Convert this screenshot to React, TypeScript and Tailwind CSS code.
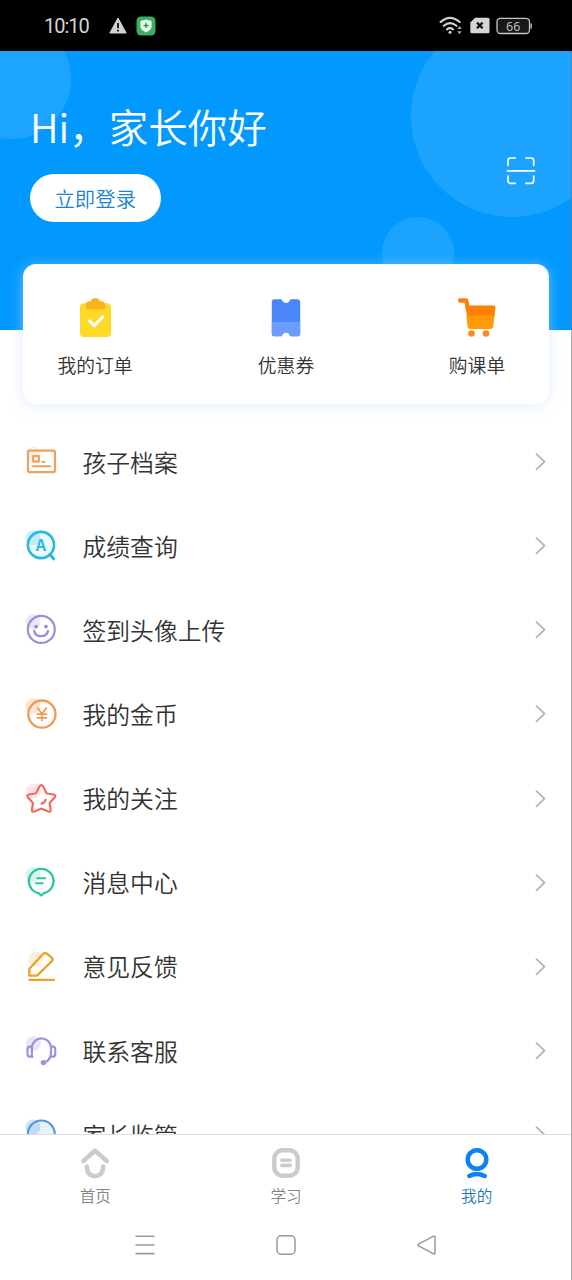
import type { ReactNode } from "react";

function Glyph({ children, tint, cx = 10, cy = 8 }: { children: ReactNode; tint: string; cx?: number; cy?: number }) {
  return (
    <svg width="36" height="36" viewBox="0 0 36 36" fill="none" strokeLinecap="round" strokeLinejoin="round" className="shrink-0">
      <circle cx={cx} cy={cy} r="7.5" fill={tint} />
      {children}
    </svg>
  );
}

const rows: { label: string; icon: ReactNode }[] = [
  {
    label: "孩子档案",
    icon: (
      <Glyph tint="#fdf0e4" cx={10.3} cy={10}>
        <g stroke="#f0a05a" strokeWidth="2.2">
          <rect x="5" y="6.600" width="27" height="21.600" rx="2" />
          <rect x="10.200" y="12" width="5.600" height="5.600" />
          <path d="M19.500 18h2M10 22.300h17.400" strokeWidth="1.900" />
        </g>
      </Glyph>
    ),
  },
  {
    label: "成绩查询",
    icon: (
      <Glyph tint="#cdeefa" cy={10}>
        <circle cx="18" cy="17" r="13.100" fill="#7fd6f0" fillOpacity="0.12" stroke="#27bbdd" strokeWidth="2.600" />
        <path d="M27 26.500l3.800 4.400" stroke="#27bbdd" strokeWidth="3" />
        <text x="18" y="22.800" textAnchor="middle" fontSize="16" fontWeight="700" fill="#27bbdd" className="font-['Noto_Sans_CJK_SC',sans-serif]">A</text>
      </Glyph>
    ),
  },
  {
    label: "签到头像上传",
    icon: (
      <Glyph tint="#e9e8fb" cy={10}>
        <circle cx="18.300" cy="17.400" r="13.500" stroke="#9590d8" strokeWidth="2.200" />
        <circle cx="13.100" cy="14.600" r="1.900" fill="#9590d8" />
        <circle cx="22.900" cy="14.600" r="1.900" fill="#9590d8" />
        <path d="M11.200 19c1.400 6.900 12.300 6.900 13.800 0" stroke="#9590d8" strokeWidth="2.300" />
      </Glyph>
    ),
  },
  {
    label: "我的金币",
    icon: (
      <Glyph tint="#fde3d2" cy={10}>
        <circle cx="18.900" cy="18.100" r="13.600" stroke="#ee9a50" strokeWidth="2.300" />
        <path d="M14.500 12l4.400 5.700 4.400-5.700M18.900 17.700v6.800M14.300 18.200h9.200M14.300 21.800h9.200" stroke="#ee9a50" strokeWidth="1.700" />
      </Glyph>
    ),
  },
  {
    label: "我的关注",
    icon: (
      <Glyph tint="#fde6e5" cx={10.5} cy={10}>
        <path
          d="M16.400 5.500q1.900-2.800 3.800 0l2.900 6q.4.800 1.300 1l6.200 1q2.800.8 1 3l-4.400 4.700q-.6.700-.5 1.600l1 6q.1 2.700-2.500 1.700l-5.900-2.600q-1-.4-2 0l-5.900 2.600q-2.600 1-2.500-1.700l1-6q.1-.9-.5-1.600l-4.400-4.700q-1.800-2.200 1-3l6.200-1q.9-.2 1.300-1z"
          stroke="#ee6b60" strokeWidth="2.200"
        />
        <path d="M22.800 18.500q-.7 3.200-4.400 4.200" stroke="#ee6b60" strokeWidth="2" />
      </Glyph>
    ),
  },
  {
    label: "消息中心",
    icon: (
      <Glyph tint="#d4f6ee" cy={9.5}>
        <path d="M15.400 28.100A12.300 12.300 0 1 1 21 28.100L18.200 30.500Z" stroke="#2bc4a6" strokeWidth="2.300" />
        <path d="M14.400 13.300h8M13.100 18.300h6.600" stroke="#2bc4a6" strokeWidth="2.100" />
      </Glyph>
    ),
  },
  {
    label: "意见反馈",
    icon: (
      <Glyph tint="#fdefd9" cx={12.5} cy={10.5}>
        <path d="M6.400 19.800L20.300 4.800q1.600-1.600 3.500-.2l5 4q1.700 1.600.2 3.400L14 26.600H6.400Z" stroke="#eba030" strokeWidth="2.400" />
        <path d="M6.600 30.900h24.200" stroke="#eba030" strokeWidth="2.400" />
      </Glyph>
    ),
  },
  {
    label: "联系客服",
    icon: (
      <Glyph tint="#e9e8fb" cx={10.5} cy={10.5}>
        <g stroke="#9995dc" strokeWidth="2.200">
          <path d="M8.900 13.600H6.500q-2 .2-2 2.500v5q0 2.500 2 2.600h2.900M28 13.600h2.200q2 .2 2 2.500v5q0 2.500-2 2.600H28" />
          <path d="M8.900 23.700V14A9.600 9.600 0 0 1 28 14V21q-.8 6.500-7 8.600" />
          <circle cx="20.400" cy="29.600" r="1.600" fill="#9995dc" />
        </g>
      </Glyph>
    ),
  },
  {
    label: "家长监管",
    icon: (
      <Glyph tint="#cfe2f8" cy={10}>
        <circle cx="18.300" cy="17" r="13.500" fill="#8bbcf0" fillOpacity="0.2" stroke="#5594df" strokeWidth="2.200" />
      </Glyph>
    ),
  },
];

function StatusBar() {
  return (
    <header className="flex h-[51px] shrink-0 items-center bg-black pl-[44px] pr-[39px] text-[#d4d4d4]">
      <span className="w-[65px] font-['Roboto',sans-serif] text-[20px] leading-none tracking-[-1px]">10:10</span>
      <svg width="18" height="17" viewBox="0 0 18 17">
        <path d="M9 1L17.200 16H.8Z" fill="#d2d2d2" stroke="#d2d2d2" strokeLinejoin="round" />
        <path d="M9 6v5.200M9 12.800v1.700" stroke="#111" strokeWidth="1.800" />
      </svg>
      <svg width="20" height="20" viewBox="0 0 20 20" className="ml-[9px]">
        <rect x=".5" y=".5" width="19" height="19" rx="4.500" fill="#3bae61" />
        <path d="M10 3.500L15.600 5v5.200c0 3-2.500 4.800-5.600 6.300-3.100-1.500-5.600-3.300-5.600-6.300V5z" fill="#e6faeb" />
        <path d="M10 7v5M7.500 9.500h5" stroke="#329652" strokeWidth="1.500" />
      </svg>
      <div className="ml-auto flex items-center gap-[6.5px]">
        <svg width="24" height="19" viewBox="0 0 24 19" fill="none" stroke="#d2d2d2" strokeWidth="2.100" strokeLinecap="round">
          <path d="M1.600 6Q11 -2.400 20.700 6M4.800 9.800Q11 4.300 17.500 9.800M8 13.300Q11 11 14 13.300" />
          <circle cx="11" cy="16.300" r="1.500" fill="#d2d2d2" stroke="none" />
          <path d="M18.200 13l2.300-3 2.300 3zM18.200 15.200l2.300 3 2.300-3z" fill="#a5a5a5" stroke="none" />
        </svg>
        <svg width="20" height="17" viewBox="0 0 20 17">
          <path d="M5.200.8H18q1.500 0 1.500 1.500v12.500q0 1.500-1.500 1.500H1.800q-1.500 0-1.500-1.500V5.600z" fill="#d6d6d6" />
          <path d="M7 5.600l5.600 5.600M12.600 5.600L7 11.200" stroke="#111" strokeWidth="2.200" />
        </svg>
        <svg width="37" height="18" viewBox="0 0 37 18">
          <rect x="1" y="1.300" width="32.500" height="15.200" rx="3.500" fill="#181818" stroke="#c5c5c5" strokeWidth="1.300" />
          <path d="M35.200 6.500v5" stroke="#aaa" strokeWidth="1.600" />
          <text x="17.200" y="13.500" textAnchor="middle" fontSize="12.500" fill="#bdbdbd" className="font-['Noto_Sans']">66</text>
        </svg>
      </div>
    </header>
  );
}

function Hero() {
  return (
    <section className="relative h-[279px] shrink-0 overflow-hidden bg-[#0299fe]">
      <div className="absolute -left-[49px] -top-[32px] h-[120px] w-[120px] rounded-full bg-white/11" />
      <div className="absolute left-[411px] -top-[36px] h-[202px] w-[202px] rounded-full bg-white/10" />
      <div className="absolute left-[382px] top-[166px] h-[72px] w-[72px] rounded-full bg-white/10" />
      <div className="relative flex items-start justify-between pl-[30px] pr-[36px] pt-[47px]">
        <div>
          <h1 className="text-[39.5px] font-[350] leading-[56px] text-white">Hi，家长你好</h1>
          <button className="mt-[20px] flex h-[47.5px] w-[130.5px] items-center justify-center rounded-full bg-white text-[20.4px] font-[350] leading-none text-[#1e83cc]">
            立即登录
          </button>
        </div>
        <svg width="30" height="30" viewBox="0 0 30 30" fill="none" stroke="white" strokeWidth="1.700" strokeLinecap="round" className="mt-[58px]">
          <path d="M2 9.300V4.500Q2 2 4.500 2h4.800M20 2h5q2.700 0 2.700 2.500v4.800M2 20v4.500Q2 27.300 4.500 27.300h4.800M27.700 20v4.500q0 2.800-2.700 2.800h-5M1.500 14.800h27" />
        </svg>
      </div>
    </section>
  );
}

function Shortcut({ label, children }: { label: string; children: ReactNode }) {
  return (
    <div className="flex w-[100px] flex-col items-center">
      {children}
      <span className="mt-[12px] text-[18.8px] font-[350] leading-[27px] text-[#333]">{label}</span>
    </div>
  );
}

function Shortcuts() {
  return (
    <section className="relative mx-[23px] -mt-[66px] flex h-[140px] shrink-0 justify-between rounded-[13px] bg-white px-[22px] pt-[33px] shadow-[0_2px_14px_rgba(200,222,255,0.5)]">
      <Shortcut label="我的订单">
        <svg width="42" height="42" viewBox="0 0 42 42">
          <rect x="6" y="6.300" width="31" height="33.700" rx="4" fill="#fdda26" />
          <path d="M14.500 4.300h2.200q1-3 4.600-3.200 3.700.2 4.700 3.200h2.200q3 .5 3 4 0 4.300-2.500 4.300h-14.400q-2.500 0-2.500-4.300 0-3.500 2.700-4z" fill="#f8b31f" />
          <path d="M15.500 24l5 4.500 8-8.500" fill="none" stroke="white" strokeWidth="3.200" strokeLinecap="round" strokeLinejoin="round" />
        </svg>
      </Shortcut>
      <Shortcut label="优惠券">
        <svg width="42" height="42" viewBox="0 0 42 42">
          <path d="M9.500 2.200H16q1 0 1.200 1.200Q18.500 6 21 6t3.800-2.600Q25 2.200 26 2.200h6.500q2.700 0 2.700 2.700v31.500q0 2.800-2.700 2.800H26q-1 0-1.200-1.300-1.300-2.400-3.800-2.400t-3.800 2.400q-.2 1.300-1.200 1.300H9.500q-2.700 0-2.700-2.800V4.900q0-2.700 2.700-2.700z" fill="#4b87f8" />
          <path d="M6.800 25h28.400v11.400q0 2.800-2.700 2.800H26q-1 0-1.200-1.300-1.300-2.400-3.800-2.400t-3.800 2.400q-.2 1.300-1.200 1.300H9.500q-2.700 0-2.700-2.800z" fill="#6c9cfc" />
        </svg>
      </Shortcut>
      <Shortcut label="购课单">
        <svg width="42" height="42" viewBox="0 0 42 42">
          <path d="M4 3.500h6.200l1.800 9" fill="none" stroke="#fb800c" strokeWidth="4.300" strokeLinecap="round" strokeLinejoin="round" />
          <path d="M9.500 8.600h27.700q2.500 0 2.200 2.400l-1 9H11z" fill="#fe7f02" />
          <path d="M10.300 18.500h28.300L37.300 29.500q-.4 2.500-2.700 2.500H14.500q-2.600 0-3-2.500z" fill="#fe9c07" />
          <circle cx="15.500" cy="36.500" r="3.300" fill="#f88c16" />
          <circle cx="30" cy="36.500" r="3.300" fill="#f88c16" />
        </svg>
      </Shortcut>
    </section>
  );
}

function MenuRow({ label, icon }: { label: string; icon: ReactNode }) {
  return (
    <li className="flex h-[84.15px] shrink-0 items-center pl-[23px] pr-[26px]">
      {icon}
      <span className="ml-[23.5px] flex-1 pb-[1px] text-[23.8px] font-[350] leading-[34px] text-[#333]">{label}</span>
      <svg width="12" height="18" viewBox="0 0 12 18" fill="none" stroke="#b4b4b4" strokeWidth="1.800" strokeLinecap="round" strokeLinejoin="round">
        <path d="M2.500 1.200l8 7.500-8 7.700" />
      </svg>
    </li>
  );
}

function Tab({ label, active = false, children }: { label: string; active?: boolean; children: ReactNode }) {
  return (
    <button className={`flex flex-1 flex-col items-center pt-[11px] ${active ? "text-[#1878be]" : "text-[#858585]"}`}>
      <svg width="34" height="34" viewBox="0 0 34 34" fill="none" strokeLinecap="round" strokeLinejoin="round">
        {children}
      </svg>
      <span className="mt-[3px] text-[15.6px] font-[350] leading-[24px]">{label}</span>
    </button>
  );
}

export default function App() {
  return (
    <div className="relative flex h-[1280px] w-[572px] flex-col overflow-hidden bg-white font-['Noto_Sans_CJK_SC',sans-serif]">
      <StatusBar />
      <main className="flex h-[1083px] shrink-0 flex-col overflow-hidden">
        <Hero />
        <Shortcuts />
        <ul className="mt-[16px] flex flex-col">
          {rows.map((row) => (
            <MenuRow key={row.label} label={row.label} icon={row.icon} />
          ))}
        </ul>
      </main>
      <nav className="flex h-[80px] shrink-0 border-t border-[#dedede] bg-white">
        <Tab label="首页">
          <path d="M5.300 15L17 4.600 28.700 15" stroke="#cbcbcb" strokeWidth="4.600" />
          <path d="M8.800 20.500q.5 9.500 8.200 9.500t8.200-9.500" stroke="#cbcbcb" strokeWidth="4.600" />
        </Tab>
        <Tab label="学习">
          <rect x="5.300" y="4.200" width="23.400" height="25.600" rx="8.500" stroke="#cbcbcb" strokeWidth="4.400" />
          <path d="M12.800 14.200h8.400M12.800 19.400h8.400" stroke="#cbcbcb" strokeWidth="3.600" />
        </Tab>
        <Tab label="我的" active>
          <circle cx="17" cy="13.500" r="9.300" stroke="#0c82f3" strokeWidth="4.500" />
          <path d="M9.300 30q7.700-4 15.400 0" stroke="#0c82f3" strokeWidth="4.500" />
        </Tab>
      </nav>
      <footer className="flex h-[60px] shrink-0 justify-center gap-[117px] pt-[19px]">
        <svg width="24" height="24" viewBox="0 0 24 24" fill="none" stroke="#999" strokeWidth="1.600">
          <path d="M2.500 3.200h19M2.500 12h19M2.500 20.600h19" />
        </svg>
        <svg width="24" height="24" viewBox="0 0 24 24" fill="none" stroke="#999" strokeWidth="1.500">
          <rect x="3" y="2.800" width="18" height="18.400" rx="4" />
        </svg>
        <svg width="24" height="24" viewBox="0 0 24 24" fill="none" stroke="#999" strokeWidth="1.500" strokeLinejoin="round">
          <path d="M3.600 11.200L18.200 3.300Q20 2.600 20 4.500v15q0 1.900-1.800 1.200L3.600 12.800q-1.200-.8 0-1.600z" />
        </svg>
      </footer>
      <div className="absolute bottom-0 right-0 top-[51px] w-px bg-[#777]/60" />
    </div>
  );
}
